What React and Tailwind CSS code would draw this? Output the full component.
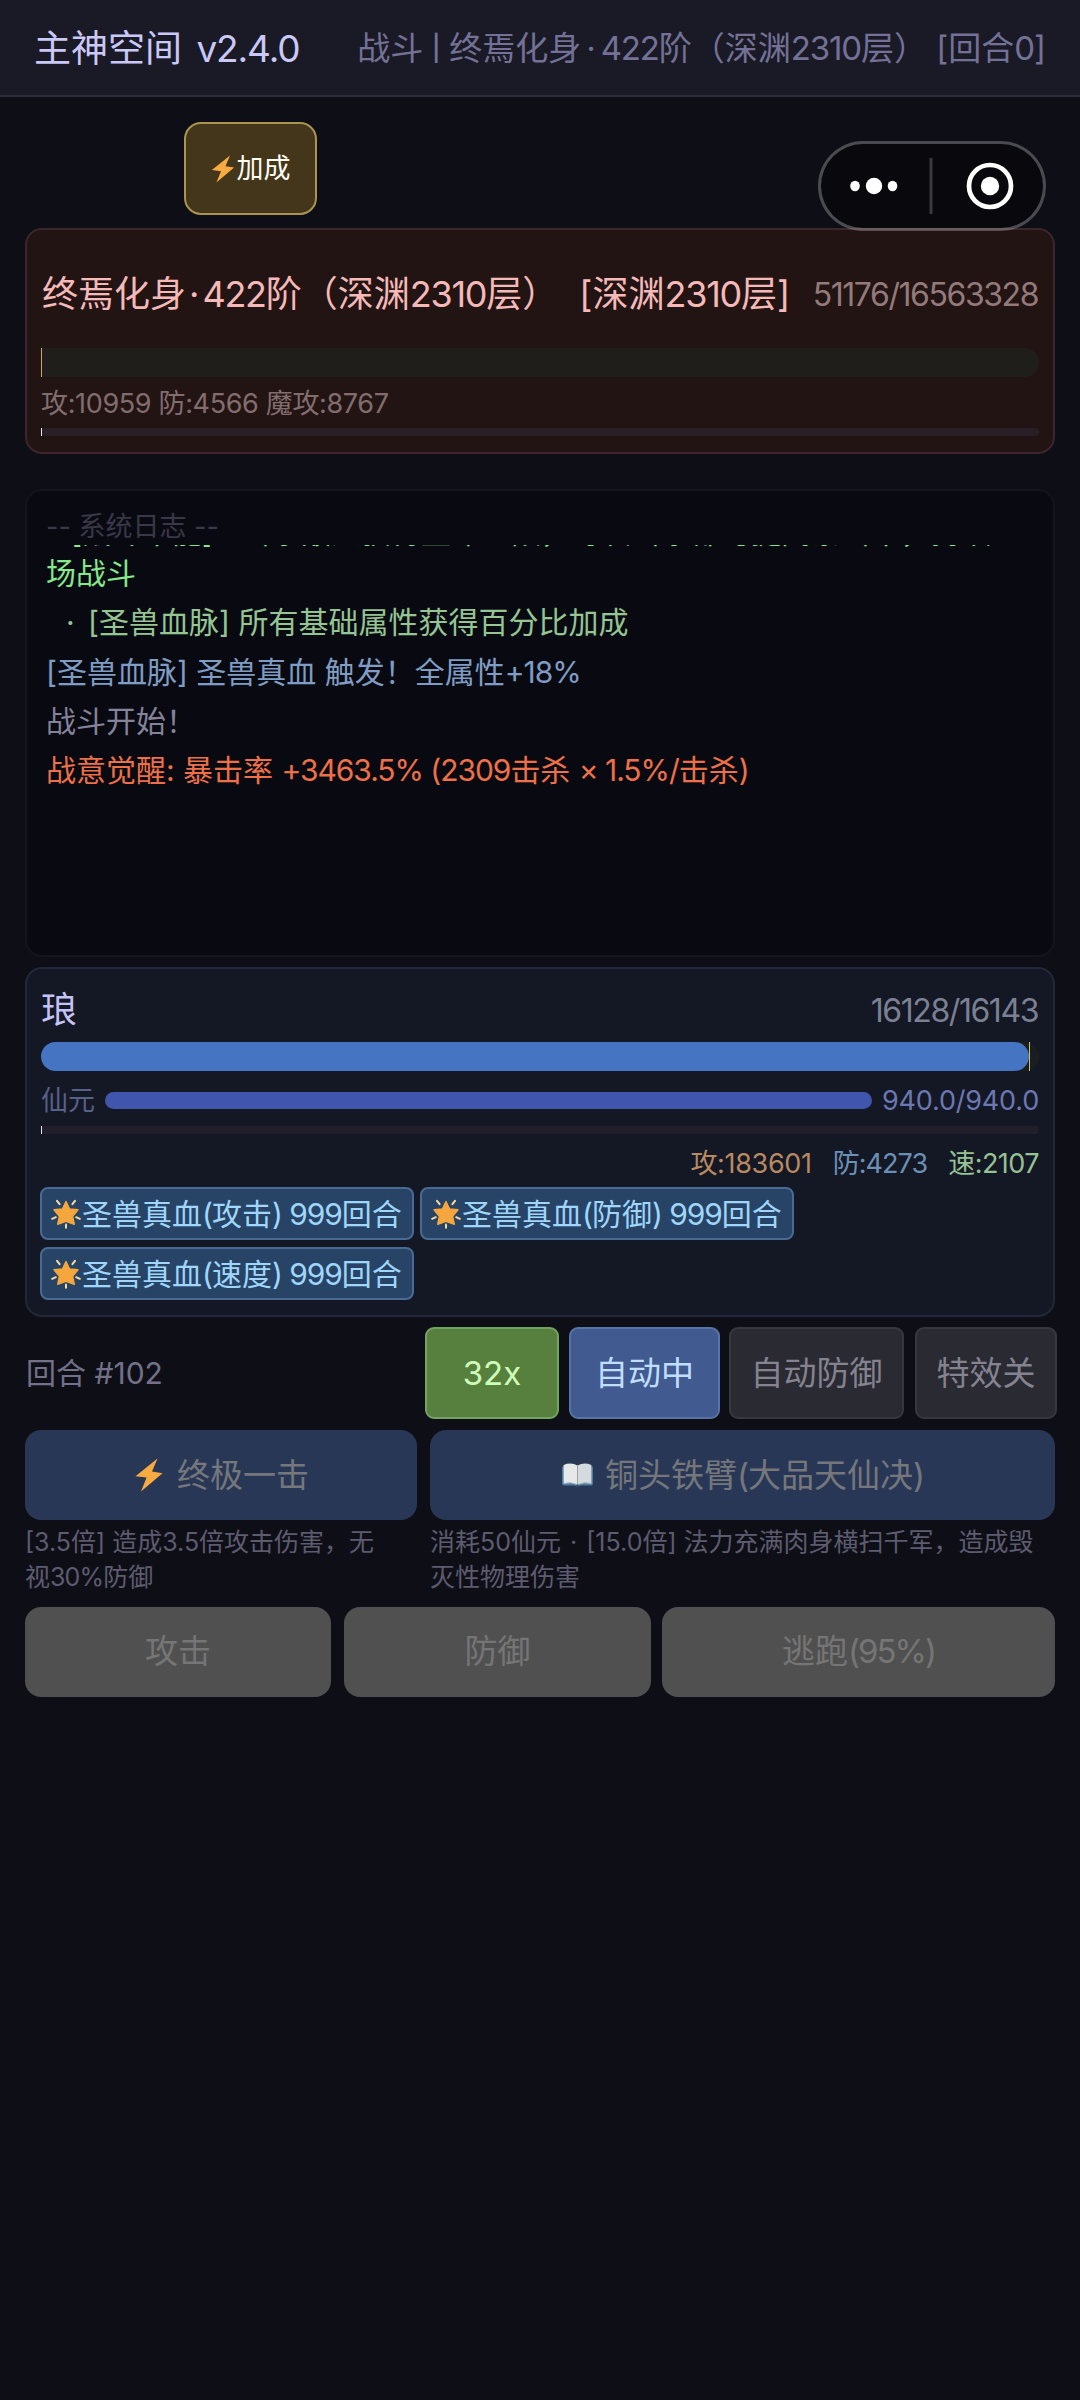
import React from 'react';
import clsx from 'clsx';

const BUFFS = ['攻击', '防御', '速度'];

const TOGGLES = [
  { label: '32x', className: 'w-[134px] mr-[10px] bg-[#57803f] border-[#74a263] text-[#cffcb9]' },
  { label: '自动中', className: 'w-[151px] mr-[9px] bg-[#415b91] border-[#5873a6] text-[#c0defe]' },
  { label: '自动防御', className: 'w-[175px] mr-[11px] bg-[#2a2a33] border-[#373741] text-[#84838f]' },
  { label: '特效关', className: 'w-[142px] bg-[#2a2a33] border-[#373741] text-[#84838f]' },
];

function Bolt({ className }) {
  return (
    <svg viewBox="0 0 28 34" className={clsx('shrink-0', className)}>
      <path d="M22.5 0.5 L0.5 18.2 L11.6 19.6 L6 33.5 L27.5 15.2 L17 13.6 Z" fill="#f8ab40" />
    </svg>
  );
}

function Star({ className }) {
  return (
    <svg viewBox="0 0 30 30" className={className}>
      <path
        d="M15 2.5 L18.6 10 L27 10.7 L21.6 17.2 L23.3 25.3 L15 22.4 L6.7 25.3 L8.4 17.2 L3 10.7 L11.4 10 Z"
        fill="#f5a63c"
        stroke="#f5a63c"
        strokeWidth="1.4"
        strokeLinejoin="round"
      />
      <g stroke="#f6dc9c" strokeWidth="2" strokeLinecap="round">
        <path d="M6 1.8 L8.6 5.2" />
        <path d="M24 1.8 L21.4 5.2" />
        <path d="M1.2 19.8 L4.8 18.2" />
        <path d="M28.8 19.8 L25.2 18.2" />
        <path d="M15 25.6 V28.8" />
      </g>
    </svg>
  );
}

function Book({ className }) {
  return (
    <svg viewBox="0 0 33 24" className={className}>
      <path d="M1 3.5 H32 V20.5 Q32 22.5 30 22.5 H19 Q16.5 25 14 22.5 H3 Q1 22.5 1 20.5 Z" fill="#4b7d9f" />
      <path d="M2.6 2 Q10 -1 16.5 2.5 V21.5 Q10 18.5 2.6 20.5 Z" fill="#e6e8ea" />
      <path d="M30.4 2 Q23 -1 16.5 2.5 V21.5 Q23 18.5 30.4 20.5 Z" fill="#d5dade" />
      <path d="M16.5 2.5 V21.5" stroke="#9aa3ab" strokeWidth="1" />
      <path d="M2.6 20.5 Q10 18.5 16.5 21.5 Q23 18.5 30.4 20.5" stroke="#aeb8c0" strokeWidth="1" fill="none" />
      <circle cx="16.5" cy="22.6" r="1.2" fill="#27435e" />
    </svg>
  );
}

// latin digits run a little tighter than the surrounding characters
function Num({ children }) {
  return <span className="tracking-[-0.035em]">{children}</span>;
}

function Dot({ className }) {
  return <span className={className}>·</span>;
}

function Capsule() {
  return (
    <div className="absolute left-[818px] top-[141px] w-[228px] h-[90px] rounded-full border-[3px] border-white/25 bg-[#09090d] bg-clip-padding">
      <svg viewBox="0 0 222 84" className="w-full h-full" fill="white">
        <ellipse cx="34" cy="42" rx="4.8" ry="5.2" />
        <circle cx="53" cy="42" r="8.2" />
        <ellipse cx="71.5" cy="42" rx="4.8" ry="5.2" />
        <rect x="108.5" y="14" width="3" height="56" fill="#3b3b3f" />
        <circle cx="169" cy="42" r="21" fill="none" stroke="white" strokeWidth="4.7" />
        <circle cx="169" cy="42" r="9.2" />
      </svg>
    </div>
  );
}

function EnemyCard() {
  return (
    <section className="h-[226px] rounded-[17px] border-2 border-[#3c252b] bg-[#221413] px-[14px] flex flex-col">
      <div className="mt-[40px] h-[48px] flex items-center justify-between whitespace-nowrap leading-none">
        <span className="pl-px text-[36px] text-[#f5b9b8]">
          终焉化身
          <Dot className="px-[3px]" />
          <Num>422</Num>阶（深渊<Num>2310</Num>层）
          <span className="pl-[21px]">
            [深渊<Num>2310</Num>层]
          </span>
        </span>
        <span className="pt-px pr-px text-[32px] tracking-[-0.045em] text-[#947a7b]">51176/16563328</span>
      </div>
      <div className="mt-[30px] h-[29px] rounded-r-full rounded-l-[15px] bg-[#1f1e1b] flex">
        <div className="w-px h-full bg-[#c9a766]" />
      </div>
      <p className="mt-[10px] h-[34px] leading-[34px] text-[27px] tracking-[-0.013em] text-[#826d6e]">
        攻:10959 防:4566 魔攻:8767
      </p>
      <div className="mt-[7px] h-[8px] rounded-full bg-[#282026]">
        <div className="w-px h-full bg-[#e8e4e4]" />
      </div>
    </section>
  );
}

function BattleLog() {
  return (
    <section className="mt-[35px] h-[468px] rounded-[17px] border-2 border-[#14151c] bg-[#090a11] px-[19px] pt-[18px]">
      <p className="h-[36px] leading-[35px] text-[27px] text-[#393748]">-- 系统日志 --</p>
      <div className="h-[380px] overflow-hidden">
        <div className="-mt-[33px] flex flex-col gap-[8.3px] text-[30px] leading-[41px] whitespace-nowrap">
          <p className="text-[#86e88a]">
            <span className="pl-[25px] pr-[28px]">[战斗本能]</span>
            击杀敌人获得生命上限，每次击杀都可提高暴击率，持续整
            <br />
            场战斗
          </p>
          <p className="pl-[20px] text-[#94c593]">
            <Dot className="pr-[5px]" /> [圣兽血脉] 所有基础属性获得百分比加成
          </p>
          <p className="text-[#7f9dc4]">
            [圣兽血脉] 圣兽真血 触发！全属性<Num>+18%</Num>
          </p>
          <p className="text-[#85839b]">战斗开始！</p>
          <p className="text-[#ee7048]">
            战意觉醒: 暴击率 <Num>+3463.5% (2309</Num>击杀 <Num>× 1.5%/</Num>击杀<Num>)</Num>
          </p>
        </div>
      </div>
    </section>
  );
}

function PlayerCard() {
  return (
    <section className="mt-[10px] h-[350px] rounded-[17px] border-2 border-[#22283a] bg-[#141724] px-[14px]">
      <div className="pt-[16px] h-[73px] flex items-center justify-between leading-none pb-[7px]">
        <span className="text-[36px] text-[#c4c3f5]">琅</span>
        <span className="pt-px pr-px text-[32px] tracking-[-0.045em] text-[#7b8193]">16128/16143</span>
      </div>
      <div className="h-[29px] rounded-full bg-[#1b1e20] flex">
        <div className="w-[988px] h-full rounded-full bg-[#4575c2]" />
        <div className="w-px h-full bg-[#c9c45e]" />
      </div>
      <div className="mt-[12px] h-[34px] flex items-center gap-[10px] text-[27px] leading-none whitespace-nowrap">
        <span className="text-[#566089]">仙元</span>
        <div className="flex-1 h-[17px] rounded-full bg-[#4056ad]" />
        <span className="tracking-[-0.007em] text-[#6c78b2]">940.0/940.0</span>
      </div>
      <div className="mt-[9px] h-[8px] rounded-full bg-[#211f2a]">
        <div className="w-px h-full bg-[#e4e4ee]" />
      </div>
      <div className="mt-[11px] h-[36px] flex items-center justify-end gap-[21px] text-[27px] leading-none">
        <span className="tracking-[-0.012em] text-[#b98a61]">攻:183601</span>
        <span className="tracking-[-0.035em] text-[#6a90b5]">防:4273</span>
        <span className="tracking-[-0.02em] text-[#96c294]">速:2107</span>
      </div>
      <div className="mt-[6px] -ml-px flex flex-wrap gap-x-[6px] gap-y-[7px]">
        {BUFFS.map((buff) => (
          <div
            key={buff}
            className="w-[374px] h-[53px] flex items-center pl-[9px] rounded-[8px] border-2 border-[#486a93] bg-[#274467] text-[30px] leading-none text-[#9fd6fa] whitespace-nowrap"
          >
            <Star className="w-[30px] h-[30px] mr-px shrink-0" />
            <span>
              圣兽真血<Num>(</Num>
              {buff}
              <Num>) 999</Num>回合
            </span>
          </div>
        ))}
      </div>
    </section>
  );
}

function SkillButton({ children }) {
  return (
    <button className="w-full h-[90px] rounded-[16px] bg-[#293757] text-[33px] text-[#75777b] flex items-center justify-center whitespace-nowrap">
      {children}
    </button>
  );
}

function PlainButton({ children, className }) {
  return (
    <button className={clsx('h-[90px] rounded-[16px] bg-[#505050] text-[33px] text-[#757575]', className)}>
      {children}
    </button>
  );
}

export default function App() {
  return (
    <div className="relative w-[1080px] min-h-[2400px] overflow-hidden bg-[#0e0f16] font-['Inter','Noto_Sans_CJK_SC',sans-serif]">
      <header className="h-[97px] pt-[2px] px-[34px] flex items-center justify-between border-b-2 border-[#2e2c3b] bg-[#1a1a26] whitespace-nowrap leading-none">
        <h1 className="text-[37px] text-[#cac8f6]">
          主神空间 <span className="pl-[4px] tracking-[-0.03em]">v2.4.0</span>
        </h1>
        <span className="text-[33px] text-[#747196]">
          战斗<span className="-mx-[3.5px]">丨</span>终焉化身
          <Dot className="px-[5px]" />
          <Num>422</Num>阶（深渊<Num>2310</Num>层） [回合<Num>0</Num>]
        </span>
      </header>

      <main className="px-[25px]">
        <div className="h-[131px] pt-[25px] pl-[159px]">
          <button className="w-[133px] h-[93px] pt-px rounded-[17px] border-2 border-[#ab9450] bg-[#44361b] text-[27px] text-[#fffdf3] flex items-center justify-center">
            <Bolt className="w-[24px] h-[28px] mr-[2px]" />
            加成
          </button>
        </div>

        <EnemyCard />
        <BattleLog />
        <PlayerCard />

        <div className="mt-[10px] h-[92px] -mr-[2px] flex items-center whitespace-nowrap">
          <span className="flex-1 pl-px text-[30px] text-[#73718a]">回合 #102</span>
          {TOGGLES.map((t) => (
            <button key={t.label} className={clsx('h-[92px] pt-px rounded-[9px] border-2 text-[33px]', t.className)}>
              {t.label}
            </button>
          ))}
        </div>

        <div className="mt-[11px] flex gap-[13px] text-[25px] leading-[35px] text-[#5d5b6f]">
          <div className="w-[392px]">
            <SkillButton>
              <Bolt className="w-[28px] h-[34px] mr-[14px]" />
              <span className="-mr-[2px]">终极一击</span>
            </SkillButton>
            <p className="mt-[5px]">
              [3.5倍] 造成3.5倍攻击伤害，无
              <br />
              视<Num>30%</Num>防御
            </p>
          </div>
          <div className="w-[625px]">
            <SkillButton>
              <Book className="w-[33px] h-[24px] mr-[11px]" />
              <span>
                铜头铁臂<Num>(</Num>大品天仙决<Num>)</Num>
              </span>
            </SkillButton>
            <p className="mt-[5px] whitespace-nowrap">
              消耗50仙元 <Dot className="px-[2px]" /> [15.0倍] 法力充满肉身横扫千军，造成毁
              <br />
              灭性物理伤害
            </p>
          </div>
        </div>

        <div className="mt-[12px] flex">
          <PlainButton className="w-[306px] mr-[13px]">攻击</PlainButton>
          <PlainButton className="w-[307px] mr-[11px]">防御</PlainButton>
          <PlainButton className="w-[393px]">
            逃跑<span className="tracking-[-0.06em]">(95%)</span>
          </PlainButton>
        </div>
      </main>

      <Capsule />
    </div>
  );
}
